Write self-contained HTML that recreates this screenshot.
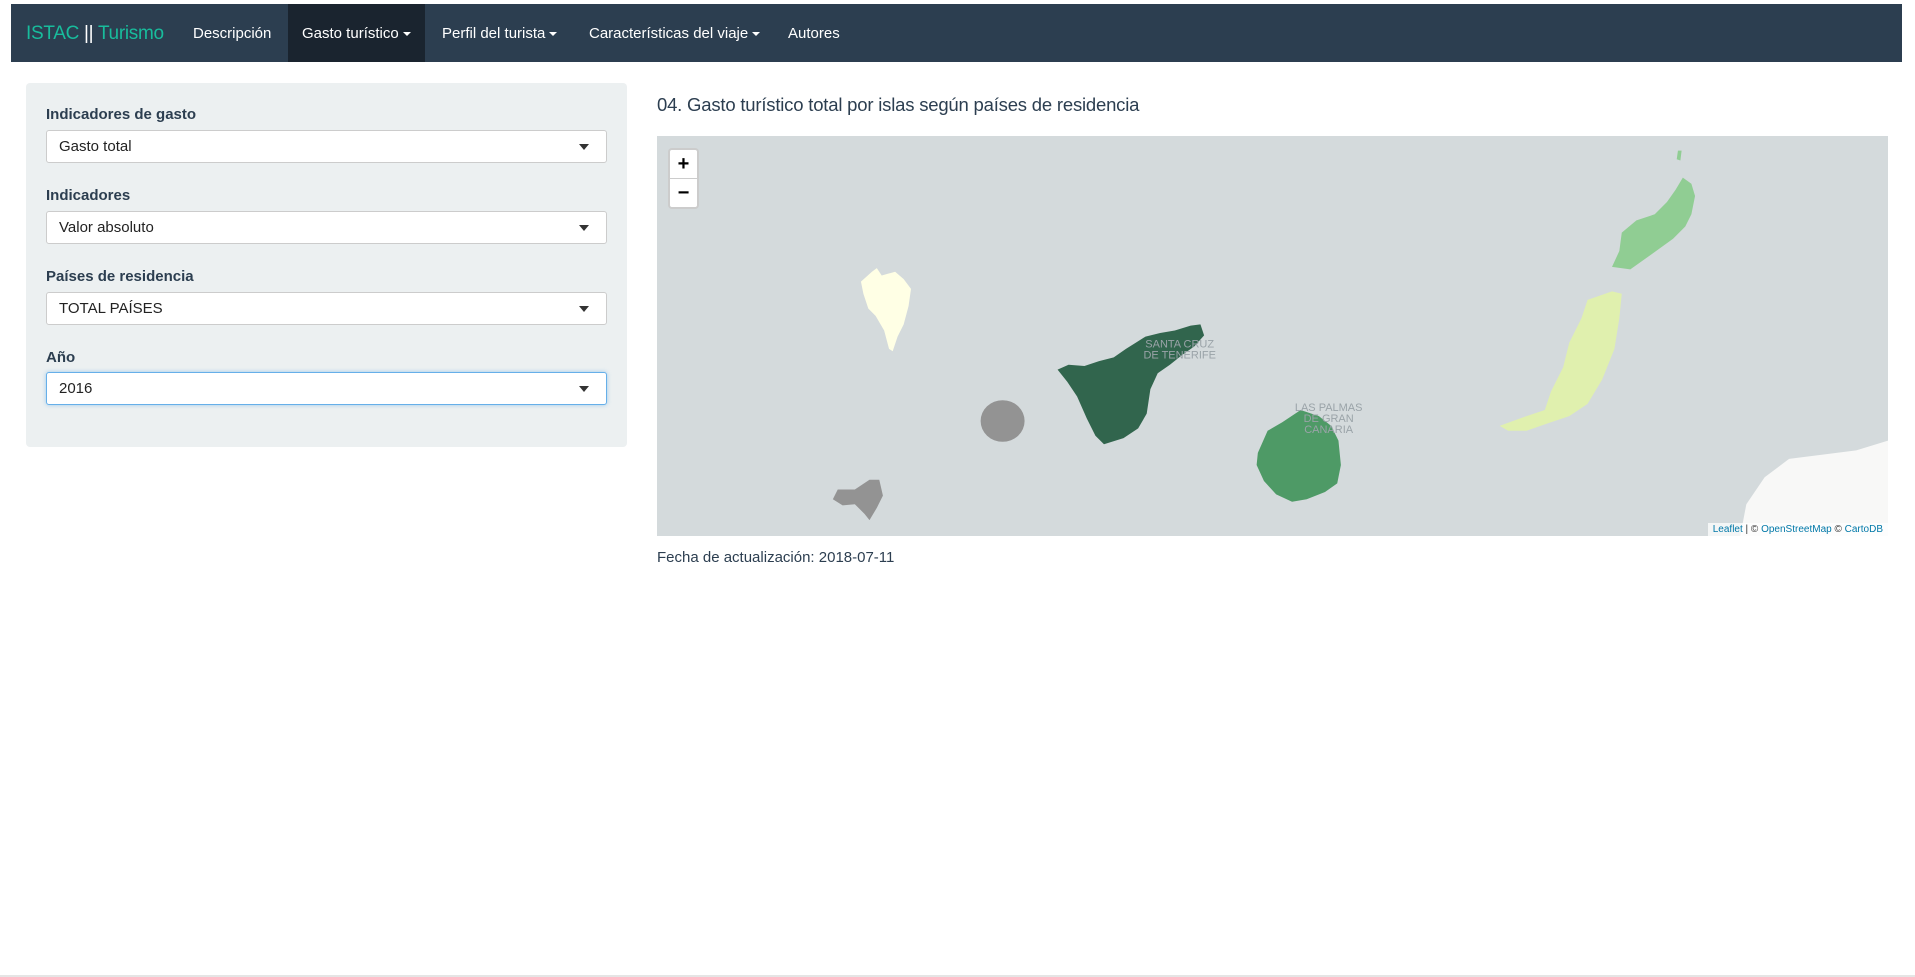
<!DOCTYPE html>
<html><head><meta charset="utf-8"><style>
*{box-sizing:border-box;margin:0;padding:0}
body{width:1915px;height:977px;background:#fff;font-family:"Liberation Sans",sans-serif;color:#2c3e50;position:relative;overflow:hidden}
.nav{position:absolute;left:11px;top:4px;width:1891px;height:58px;background:#2c3e50}
.nav span{position:absolute;top:0;height:58px;line-height:60px;color:#fff;font-size:15px}
.brand{color:#18bc9c!important;font-size:19px!important;letter-spacing:-0.3px}
.active{background:#1a242f;padding:0 14px}
.caret{display:inline-block;width:0;height:0;border-left:4px solid transparent;border-right:4px solid transparent;border-top:4px solid #fff;vertical-align:middle;margin-left:4px}
.well{position:absolute;left:26px;top:83px;width:601px;height:364px;background:#ecf0f1;border-radius:4px}
.lbl{position:absolute;left:46px;font-size:15px;font-weight:bold;color:#2c3e50}
.sel{position:absolute;left:46px;width:561px;height:33px;background:#fff;border:1px solid #ccc;border-radius:3px;font-size:15px;line-height:31px;padding-left:12px;color:#222}
.sel:after{content:"";position:absolute;right:17px;top:13px;border-left:5px solid transparent;border-right:5px solid transparent;border-top:6px solid #333}
.focus{border-color:#66afe9;box-shadow:0 0 4px rgba(102,175,233,.6)}
h4{position:absolute;left:657px;top:94px;font-size:18.5px;font-weight:normal;color:#2c3e50;letter-spacing:-0.2px}
.map{position:absolute;left:657px;top:136px;width:1231px;height:400px;background:#d4dadc;overflow:hidden}
.zc{position:absolute;left:11px;top:12px;width:31px;height:61px;background:#fff;border:2px solid rgba(0,0,0,.2);border-radius:4px;font-size:20px;font-weight:bold;text-align:center;color:#000}
.zc div{height:29px;line-height:28px}
.attr{position:absolute;right:0;bottom:0;background:rgba(255,255,255,.75);font-size:10px;padding:1px 5px;color:#333}
.attr a{color:#0078a8;text-decoration:none}
.fecha{position:absolute;left:657px;top:549px;font-size:15px;color:#2c3e50}
.bot{position:absolute;left:0;top:975px;width:1915px;height:2px;background:#e5e5e5}
</style></head><body>
<div class="nav">
<span class="brand" style="left:15px">ISTAC <span style="position:static;color:#fff;font-size:19px">||</span> Turismo</span>
<span style="left:182px">Descripción</span>
<span class="active" style="left:277px">Gasto turístico<i class="caret"></i></span>
<span style="left:431px">Perfil del turista<i class="caret"></i></span>
<span style="left:578px">Características del viaje<i class="caret"></i></span>
<span style="left:777px">Autores</span>
</div>
<div class="well"></div>
<div class="lbl" style="top:106px">Indicadores de gasto</div>
<div class="sel" style="top:130px">Gasto total</div>
<div class="lbl" style="top:187px">Indicadores</div>
<div class="sel" style="top:211px">Valor absoluto</div>
<div class="lbl" style="top:268px">Países de residencia</div>
<div class="sel" style="top:292px">TOTAL PAÍSES</div>
<div class="lbl" style="top:349px">Año</div>
<div class="sel focus" style="top:372px">2016</div>
<h4>04. Gasto turístico total por islas según países de residencia</h4>
<div class="map">
<svg width="1231" height="400" viewBox="538 111 1008 327" preserveAspectRatio="none" style="position:absolute;left:0;top:0">
<polygon fill="#f8f8f7" points="1546,360 1520,368 1465,375 1445,390 1430,412 1425,438 1546,438"/>
<polygon fill="#ffffe5" points="714,222 718,219 722,225 733,222 740,228 746,236 744,250 740,265 735,275 731,287 728,285 724,270 717,258 711,252 707,240 705,230"/>
<polygon fill="#31654d" points="866,302 875,298 888,299 900,295 912,292 922,285 930,280 938,275 950,272 962,270 975,266 983,265 986,274 978,283 968,290 958,298 948,305 942,318 939,338 932,350 920,358 904,363 897,356 890,342 882,324 874,312"/>
<ellipse fill="#939393" cx="821" cy="344" rx="18" ry="17"/>
<polygon fill="#939393" points="700,400 712,392 720,392 723,405 718,415 712,425 708,420 700,412 690,413 682,408 686,400"/>
<polygon fill="#4e9a66" points="1030,370 1038,352 1050,345 1062,337 1065,335 1080,340 1090,348 1096,360 1098,380 1095,395 1085,402 1070,408 1058,410 1045,404 1035,393 1029,380"/>
<polygon fill="#90cd93" points="1320,218 1326,205 1328,190 1340,180 1355,175 1365,165 1372,155 1378,145 1385,150 1388,160 1385,175 1380,185 1370,195 1352,208 1335,220"/>
<polygon fill="#90cd93" points="1374,123 1377,123 1376,131 1373,130"/>
<polygon fill="#e0f0ae" points="1300,245 1320,238 1328,240 1326,260 1322,285 1312,310 1300,330 1285,340 1270,345 1250,352 1235,352 1228,348 1250,340 1265,335 1270,320 1280,300 1285,280 1295,260"/>
<g fill="#9aa3a8" font-size="9" font-family="Liberation Sans" text-anchor="middle">
<text x="966" y="284">SANTA CRUZ</text><text x="966" y="293">DE TENERIFE</text>
<text x="1088" y="336">LAS PALMAS</text><text x="1088" y="345">DE GRAN</text><text x="1088" y="354">CANARIA</text>
</g>
</svg>
<div class="zc"><div style="border-bottom:1px solid #ccc">+</div><div>−</div></div>
<div class="attr"><a>Leaflet</a> | © <a>OpenStreetMap</a> © <a>CartoDB</a></div>
</div>
<div class="fecha">Fecha de actualización: 2018-07-11</div>
<div class="bot"></div>
</body></html>
